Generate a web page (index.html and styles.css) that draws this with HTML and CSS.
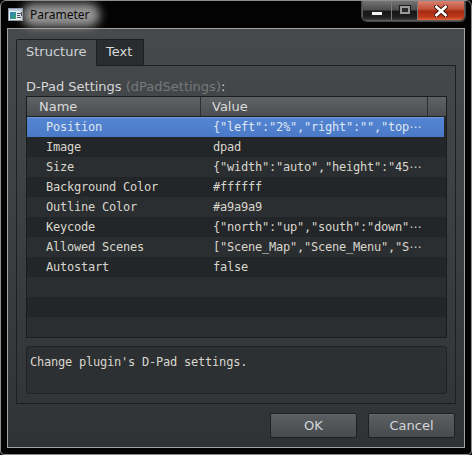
FILE: index.html
```html
<!DOCTYPE html>
<html>
<head>
<meta charset="utf-8">
<link rel="stylesheet" href="styles.css">
</head>
<body>
<div class="window">
  <div class="titlebar">
    <svg class="appicon" width="15" height="13" viewBox="0 0 15 13">
      <defs>
        <linearGradient id="pic" x1="0" y1="0" x2="1" y2="1">
          <stop offset="0" stop-color="#2f7fc8"/>
          <stop offset="1" stop-color="#3aa46a"/>
        </linearGradient>
      </defs>
      <rect x="0.5" y="0.5" width="14" height="12" fill="#f2f4f6" stroke="#8f9aa6"/>
      <rect x="1" y="1" width="13" height="2" fill="#bcd0e6"/>
      <rect x="2" y="4" width="6" height="7" fill="url(#pic)"/>
      <rect x="9" y="5" width="4" height="1" fill="#3b4a66"/>
      <rect x="9" y="7" width="3" height="1" fill="#3b4a66"/>
      <rect x="9" y="9" width="4" height="1" fill="#3b4a66"/>
      <rect x="13" y="4" width="1" height="4" fill="#1d2a44"/>
    </svg>
    <span class="title">Parameter</span>
    <div class="caption">
      <div class="cbtn glass min"><span class="min-glyph"></span></div>
      <div class="cbtn glass max"><span class="max-glyph"></span></div>
      <div class="cbtn close">
        <svg width="14" height="12" viewBox="0 0 14 12">
          <path d="M2.5 2 L11.5 10 M11.5 2 L2.5 10" stroke="#3a1208" stroke-width="4.6" stroke-linecap="square" fill="none"/>
          <path d="M2.5 2 L11.5 10 M11.5 2 L2.5 10" stroke="#ffffff" stroke-width="2.8" stroke-linecap="square" fill="none"/>
        </svg>
      </div>
    </div>
  </div>
  <div class="client">
    <div class="tabs">
      <div class="tab active">Structure</div>
      <div class="tab">Text</div>
    </div>
    <div class="pane">
      <div class="label">D-Pad Settings <span class="key">(dPadSettings)</span>:</div>
      <div class="table">
        <div class="thead">
          <div class="th th-name">Name</div>
          <div class="th th-value">Value</div>
          <div class="th th-corner"></div>
        </div>
        <div class="tbody">
          <div class="row sel"><div class="c n">Position</div><div class="c v">{"left":"2%","right":"","top<span class="el">⋯</span></div></div>
          <div class="row"><div class="c n">Image</div><div class="c v">dpad</div></div>
          <div class="row"><div class="c n">Size</div><div class="c v">{"width":"auto","height":"45<span class="el">⋯</span></div></div>
          <div class="row"><div class="c n">Background Color</div><div class="c v">#ffffff</div></div>
          <div class="row"><div class="c n">Outline Color</div><div class="c v">#a9a9a9</div></div>
          <div class="row"><div class="c n">Keycode</div><div class="c v">{"north":"up","south":"down"<span class="el">⋯</span></div></div>
          <div class="row"><div class="c n">Allowed Scenes</div><div class="c v">["Scene_Map","Scene_Menu","S<span class="el">⋯</span></div></div>
          <div class="row"><div class="c n">Autostart</div><div class="c v">false</div></div>
          <div class="row"></div>
          <div class="row"></div>
          <div class="row"></div>
        </div>
      </div>
      <div class="desc">Change plugin's D-Pad settings.</div>
    </div>
    <div class="buttons">
      <button class="btn">OK</button>
      <button class="btn">Cancel</button>
    </div>
  </div>
</div>
</body>
</html>
```

FILE: styles.css
```css
html, body {
  margin: 0;
  padding: 0;
  background: #000;
}

.window {
  width: 472px;
  height: 455px;
  box-sizing: border-box;
  border: 1px solid #8e8e8e;
  border-radius: 6px 6px 4px 4px;
  background: #030303;
  padding: 0 6px 6px 6px;
  display: flex;
  flex-direction: column;
  overflow: hidden;
  font-family: "DejaVu Sans", sans-serif;
}

/* title bar */
.titlebar {
  height: 27px;
  display: flex;
  align-items: center;
  flex: none;
}

.appicon {
  margin-left: 1px;
  flex: none;
}

.title {
  position: relative;
  margin-left: 7px;
  font-family: "Noto Sans", sans-serif;
  font-size: 12px;
  color: #0a0a0a;
  line-height: 14px;
  margin-top: 1px;
  isolation: isolate;
}

.title::before {
  content: "";
  position: absolute;
  left: -8px;
  right: -10px;
  top: -5px;
  bottom: -5px;
  border-radius: 12px;
  background: rgba(165, 165, 165, 0.9);
  filter: blur(5px);
  z-index: -1;
}

.caption {
  margin-left: auto;
  align-self: flex-start;
  display: flex;
  height: 20px;
  box-sizing: border-box;
  border: 1px solid #5c5c5c;
  border-top: none;
  border-radius: 0 0 5px 5px;
  overflow: hidden;
  box-shadow: 0 0 0 1px rgba(200, 200, 200, 0.35);
}

.cbtn {
  display: flex;
  align-items: center;
  justify-content: center;
  height: 100%;
}

.glass {
  background: linear-gradient(#747474 0%, #4e4e4e 45%, #161616 55%, #202020 85%, #3e3e3e 100%);
  border-right: 1px solid #7a7a7a;
}

.min { width: 28px; }
.max { width: 25px; }

.close {
  width: 46px;
  background: linear-gradient(#d98070 0%, #c4563e 40%, #a82a12 55%, #c23a1c 85%, #e0683c 100%);
}

.min-glyph {
  width: 10px;
  height: 3px;
  background: #f4f4f4;
  border: 1px solid #202020;
  margin-top: 6px;
}

.max-glyph {
  width: 6px;
  height: 4px;
  border: 2px solid #9a9a9a;
  outline: 1px solid #1a1a1a;
  background: #2a2a2a;
  margin-top: -2px;
}

/* client */
.client {
  height: 420px;
  box-sizing: border-box;
  border: 1px solid #a2a2a2;
  background: linear-gradient(#474a4d, #303336);
  padding: 10px 8px 9px 8px;
  display: flex;
  flex-direction: column;
  flex: none;
}

.tabs {
  display: flex;
  height: 26px;
  flex: none;
}

.tab {
  box-sizing: border-box;
  height: 26px;
  border-top: 1px solid #1c1e20;
  border-right: 1px solid #1c1e20;
  padding: 0 0 0 9px;
  font-size: 13px;
  line-height: 24px;
  color: #dadada;
  background: #2a2d30;
  width: 47px;
}

.tab.active {
  position: relative;
  z-index: 1;
  width: 81px;
  height: 27px;
  margin-bottom: -1px;
  border-left: 1px solid #1c1e20;
  border-radius: 2px 0 0 0;
  background: #45484b;
  color: #cfd3d6;
}

.pane {
  height: 339px;
  box-sizing: border-box;
  border: 1px solid #1c1e20;
  padding: 13px 8px 9px 9px;
  display: flex;
  flex-direction: column;
  flex: none;
}

.label {
  font-size: 13px;
  line-height: 15px;
  height: 15px;
  color: #d6d6d6;
  margin-bottom: 2px;
  white-space: nowrap;
}

.label .key {
  color: #787878;
}

.table {
  height: 242px;
  box-sizing: border-box;
  border: 1px solid #1a1c1e;
  display: flex;
  flex-direction: column;
  background: #26292c;
}

.thead {
  display: flex;
  height: 20px;
  box-sizing: border-box;
  border-bottom: 1px solid #1e2022;
  background: linear-gradient(#606366, #4b4e51);
  flex: none;
}

.th {
  box-sizing: border-box;
  height: 19px;
  font-size: 13px;
  line-height: 19px;
  color: #dadada;
  border-right: 1px solid #2c2e30;
}

.th-name { width: 174px; padding-left: 12px; }
.th-value { width: 227px; padding-left: 11px; }
.th-corner { width: 18px; border-right: none; }

.tbody {
  display: flex;
  flex-direction: column;
}

.row {
  display: flex;
  height: 20px;
  box-sizing: border-box;
  font-family: "DejaVu Sans Mono", monospace;
  font-size: 12px;
  letter-spacing: -0.22px;
  line-height: 20px;
  color: #d8d6cc;
  white-space: nowrap;
}

.row:nth-child(odd) { background: #2b2e31; }
.row:nth-child(even) { background: #232629; }

.row.sel {
  background: linear-gradient(#5485d2, #4a79c8);
  border-top: 1px solid #6f96d8;
  line-height: 18px;
  color: #dfe7f2;
  margin-right: 2px;
}

.c.n {
  width: 174px;
  padding-left: 19px;
  box-sizing: border-box;
}

.c.v {
  padding-left: 12px;
}

.el {
  font-family: "DejaVu Sans", sans-serif;
  font-size: 12px;
  letter-spacing: 0;
}

.desc {
  margin-top: 8px;
  height: 48px;
  box-sizing: border-box;
  border: 1px solid #1f2123;
  border-radius: 3px;
  background: #2d3033;
  padding: 8px 3px 0 3px;
  font-family: "DejaVu Sans Mono", monospace;
  font-size: 12px;
  letter-spacing: -0.22px;
  line-height: 15px;
  color: #d8d6cc;
}

.buttons {
  display: flex;
  justify-content: flex-end;
  gap: 11px;
  margin-top: 9px;
  padding-right: 1px;
  flex: none;
}

.btn {
  width: 87px;
  height: 25px;
  box-sizing: border-box;
  border: 1px solid #1e2022;
  border-radius: 2px;
  background: linear-gradient(#5c5f62, #484b4e);
  box-shadow: inset 0 1px 0 rgba(255, 255, 255, 0.06);
  font-family: "DejaVu Sans", sans-serif;
  font-size: 13px;
  color: #d2d6da;
  padding: 0;
  margin: 0;
}
```
